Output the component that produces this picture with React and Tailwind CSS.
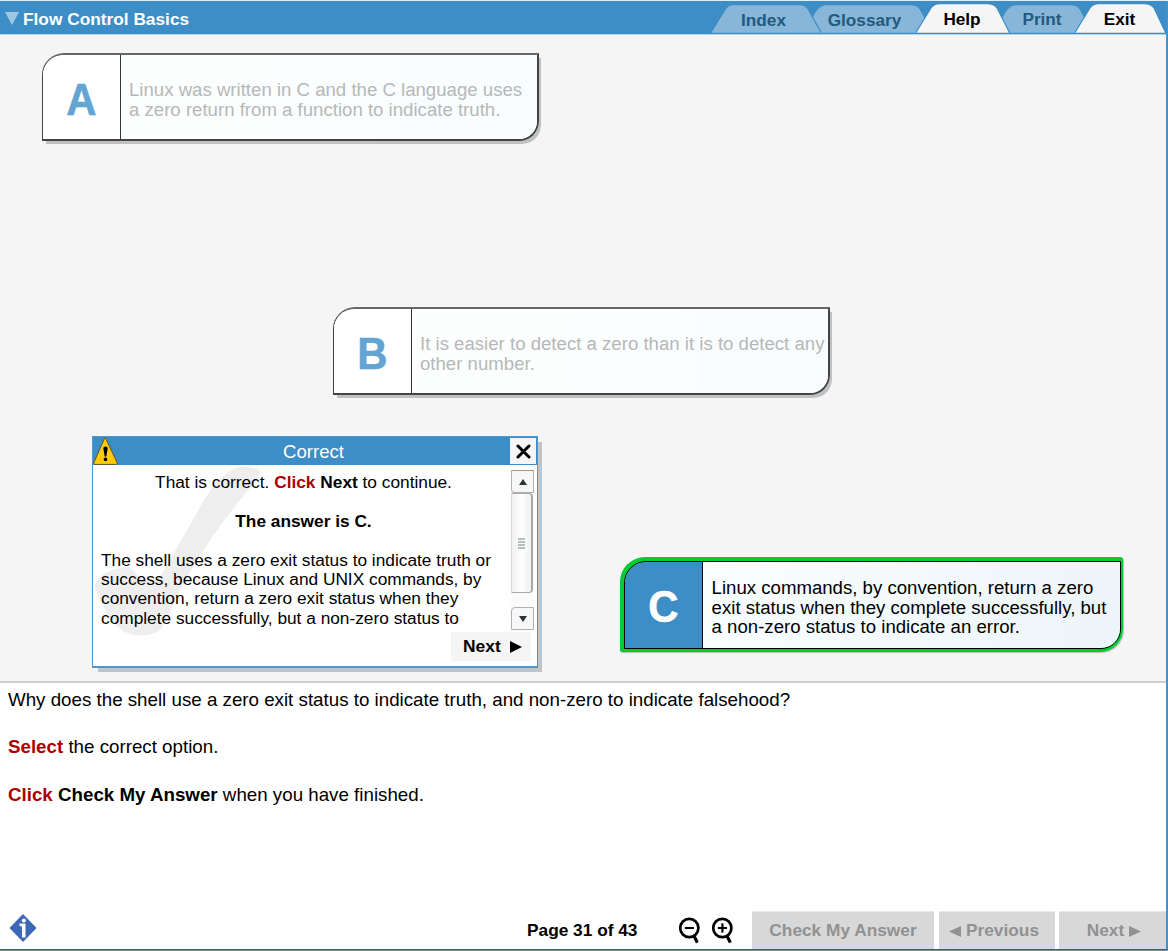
const inactive = '#88b6d8';
const active = '#f5f5f5';

function Tab({ label, width, path, fill, className, textClass }) {
  return (
    <button className={`relative h-[29px] shrink-0 text-[17.2px] font-bold whitespace-nowrap ${className}`}>
      <svg className="absolute inset-0 h-[29px]" width={width} height="29" viewBox={`0 0 ${width} 29`}>
        <path d={path} fill={fill} stroke="#3d8dc6" strokeWidth="1.2" />
      </svg>
      <span className={`relative ${textClass}`}>{label}</span>
    </button>
  );
}

function Option({ letter, lines, className, letterClass, textClass }) {
  return (
    <div className={`flex h-[88px] w-[497px] overflow-hidden rounded-tl-[22px] rounded-br-[20px] ${className}`}>
      <div className={`flex w-[78px] shrink-0 items-center justify-center border-r pt-[4px] text-[45px] leading-none font-bold [-webkit-text-stroke:0.6px_currentColor] ${letterClass}`}>
        <span className="inline-block scale-x-[0.93]">{letter}</span>
      </div>
      <div className={`flex flex-1 flex-col justify-center bg-linear-to-r text-[18.63px] leading-[19.6px] whitespace-nowrap ${textClass}`}>
        {lines.map((line) => <p key={line}>{line}</p>)}
      </div>
    </div>
  );
}

function Magnifier({ plus }) {
  return (
    <svg width="24" height="28" viewBox="0 0 24 28" fill="none" stroke="#000">
      <circle cx="11.3" cy="12" r="9.1" strokeWidth="2.7" />
      <path d="M6.8 12H16" strokeWidth="2" />
      {plus && <path d="M11.4 7.4V16.6" strokeWidth="2.2" />}
      <path d="M15.8 19.5L19.3 26.6" strokeWidth="3.2" />
    </svg>
  );
}

function Scrollbar() {
  return (
    <div className="mt-px flex h-[160px] w-[23px] flex-col bg-[#fbfbfb]">
      <div className="flex h-[23px] items-center justify-center rounded-bl-[4px] border border-[#b0b0b0] border-t-[#999] bg-[#f7f7f7]">
        <svg width="8" height="6"><path d="M4 0L8 6H0Z" fill="#2b333c" /></svg>
      </div>
      <div className="mr-px flex h-[100px] flex-col items-center justify-center gap-px rounded-r-[4px] border border-r-2 border-[#a9a9a9] border-l-[#d8d8d8] bg-linear-to-r from-[#f0f0f0] via-white to-[#f0f0f0]">
        <i className="h-[2px] w-[7px] bg-[#b5bdbd]" />
        <i className="h-[2px] w-[7px] bg-[#b5bdbd]" />
        <i className="h-[2px] w-[7px] bg-[#b5bdbd]" />
        <i className="h-[2px] w-[7px] bg-[#b5bdbd]" />
      </div>
      <div className="mt-auto flex h-[23px] items-center justify-center rounded-tl-[4px] border border-[#b0b0b0] bg-[#f7f7f7]">
        <svg width="8" height="6"><path d="M4 6L0 0H8Z" fill="#2b333c" /></svg>
      </div>
    </div>
  );
}

function Feedback() {
  return (
    <section className="flex h-[232px] w-[446px] flex-col border border-b-2 border-[#4d97cc] bg-white shadow-[5px_5px_0_-1px_#c3c3c3]">
      <header className="flex h-[28px] shrink-0 items-start bg-[#3d8dc6]">
        <svg width="26" height="28" viewBox="0 0 26 28">
          <path d="M12.5 1L24.3 26Q24.5 27.3 23.5 27.4H1.5Q.3 27.3.7 26L11.5 1.4Q12 .6 12.5 1Z" fill="#ffcb05" stroke="#5d542c" strokeWidth="1" />
          <path d="M12.5 9.5Q15 9.5 14.6 12L13.3 19.5H11.7L10.4 12Q10 9.5 12.5 9.5Z" />
          <circle cx="12.5" cy="22.4" r="1.8" />
        </svg>
        <h2 className="flex-1 text-center text-[18.6px] leading-[30px] text-white"><span className="pr-[2px]">Correct</span></h2>
        <button className="mt-px mr-px flex h-[26px] w-[26px] items-center justify-center bg-[#f5f5f5]">
          <svg width="15" height="15" viewBox="0 0 15 15"><path d="M2 2L13 13M13 2L2 13" stroke="#000" strokeWidth="3" strokeLinecap="round" /></svg>
        </button>
      </header>
      <div className="relative flex h-[166px] shrink-0 pt-[4px]">
        <svg className="absolute top-0 left-0" width="170" height="174" viewBox="40 122 510 522">
          <path d="M540 138Q525 127 490 127C450 130 410 165 375 225L240 460Q210 480 188 466L150 428C110 425 40 455 46 490C65 540 90 590 130 620C160 637 205 640 237 620Q257 600 270 565C340 400 460 250 530 168Q545 148 540 138Z" fill="#eee" />
        </svg>
        <div className="relative w-[418px] overflow-hidden pt-[4px] pl-[8px] text-[17.3px] leading-[19.4px] whitespace-nowrap text-black">
          <p className="pr-[5px] text-center">That is correct. <b className="text-[#ab0000]">Click</b> <b>Next</b> to continue.</p>
          <p className="my-[19.4px] pr-[5px] text-center font-bold">The answer is C.</p>
          <p>The shell uses a zero exit status to indicate truth or</p>
          <p>success, because Linux and UNIX commands, by</p>
          <p>convention, return a zero exit status when they</p>
          <p>complete successfully, but a non-zero status to</p>
        </div>
        <Scrollbar />
      </div>
      <button className="mt-[1px] mr-[6px] flex h-[29px] w-[80px] shrink-0 items-center gap-[9px] self-end bg-[#f5f5f5] pl-3 text-[17.4px] leading-none font-bold">
        Next
        <svg width="12" height="12"><path d="M0 0L12 6L0 12Z" /></svg>
      </button>
    </section>
  );
}

export default function App() {
  return (
    <div className="flex h-[951px] w-[1168px] flex-col overflow-hidden border-t border-b border-t-[#e5eeee] border-b-[#7d8f91] bg-white font-['Liberation_Sans',Arial,sans-serif] text-black">
      <div className="flex min-h-0 flex-1 flex-col border-r-2 border-b border-r-[#4392ca] border-b-[#2d5f96]">
        <header className="flex h-[34px] shrink-0 items-end border-b border-[#b5d5ea] bg-[#3d8dc6]">
          <svg className="mb-[8px] ml-[5px]" width="14" height="14"><path d="M0 0H14L7 13Z" fill="#9dc6e2" /></svg>
          <h1 className="ml-[4px] w-[688px] text-[17.3px] leading-[30px] font-bold whitespace-nowrap text-white">Flow Control Basics</h1>
          <nav className="mb-px flex h-[29px]">
            <Tab label="Index" width={110} fill={inactive} className="z-10 w-[110px] leading-[32px]" textClass="text-[#215a80] -left-[2.5px]"
              path="M-.6 29.4L15 4Q18 .6 23 .6H89Q94 .6 97 5L110.6 29.4Z" />
            <Tab label="Glossary" width={131} fill={inactive} className="-ml-[18px] w-[131px] leading-[32px]" textClass="text-[#215a80] -left-[4px]"
              path="M0 29.4L12 8Q17 .6 23 .6H107Q114 .6 117 5L131 29.4Z" />
            <Tab label="Help" width={94} fill={active} className="z-10 -ml-[18px] w-[94px] leading-[31px]" textClass="text-black -left-px"
              path="M-.6 29.4L15 4Q18-.4 24-.4H71Q78-.4 81 4L94 29.4Z" />
            <Tab label="Print" width={100} fill={inactive} className="-ml-[17px] w-[100px] leading-[31px]" textClass="text-[#215a80] -left-px"
              path="M0 29.4L12 8Q17 .6 23 .6H77Q84 .6 87 5L100 29.4Z" />
            <Tab label="Exit" width={91} fill={active} className="z-10 -ml-[18px] w-[91px] leading-[31px]" textClass="text-black -left-px"
              path="M-.6 29.4L15 4Q18-.4 24-.4H69Q76-.4 79 4L91 29.4Z" />
          </nav>
        </header>

        <main className="flex h-[648px] shrink-0 flex-col border-b-2 border-[#cecece] bg-[#f5f5f5]">
          <Option letter="A" lines={['Linux was written in C and the C language uses', 'a zero return from a function to indicate truth.']}
            className="mt-[18px] ml-[42px] border-2 border-l border-[#444] border-t-[#666] shadow-[3px_4px_0_-1px_#c1c1c1]"
            letterClass="border-[#333] bg-white text-[#62a4d2]"
            textClass="pt-[5px] pl-2 from-[#fdfefe] to-[#f9fdff] text-[#b6b8b8]" />
          <Option letter="B" lines={['It is easier to detect a zero than it is to detect any', 'other number.']}
            className="mt-[166px] ml-[333px] border-2 border-l border-[#444] border-t-[#666] shadow-[3px_4px_0_-1px_#c1c1c1]"
            letterClass="border-[#333] bg-white text-[#62a4d2]"
            textClass="pt-[5px] pl-2 from-[#fdfefe] to-[#f9fdff] text-[#b6b8b8]" />
          <div className="mt-[41px] flex items-start">
            <div className="ml-[92px]"><Feedback /></div>
            <div className="mt-[121px] ml-[82px] rounded-tl-[25px] rounded-tr-[3px] rounded-br-[23px] rounded-bl-[3px] bg-[#00cc33] py-[3.5px] pr-[2.4px] pl-[4px] shadow-[0.5px_1px_1px_#bbb]">
              <Option letter="C" lines={['Linux commands, by convention, return a zero', 'exit status when they complete successfully, but', 'a non-zero status to indicate an error.']}
                className="border border-black"
                letterClass="border-black bg-[#3d8dc6] text-white"
                textClass="pt-[6px] pl-[8.6px] from-[#f9feff] to-[#edf5f9] text-black" />
            </div>
          </div>
        </main>

        <section className="flex-1 pl-2 text-[18.74px] leading-[24px] whitespace-nowrap">
          <p className="mt-[5px]">Why does the shell use a zero exit status to indicate truth, and non-zero to indicate falsehood?</p>
          <p className="mt-[23px]"><b className="text-[#ab0000]">Select</b> the correct option.</p>
          <p className="mt-6"><b className="text-[#ab0000]">Click</b> <b>Check My Answer</b> when you have finished.</p>
        </section>

        <footer className="flex h-[38px] shrink-0 items-center text-[17.3px] font-bold whitespace-nowrap">
          <svg className="mb-[4px] ml-[9px]" width="28" height="28" viewBox="0 0 28 28">
            <path d="M14 0L27.5 14L14 28L.5 14Z" fill="#3d67b7" />
            <path d="M10.5 9.5H16.5V23.5H13V12.5L10.5 12Z" fill="#fff" />
            <circle cx="14.8" cy="6.5" r="2" fill="#fff" />
          </svg>
          <span className="ml-[490px] w-[151px] pt-px">Page 31 of 43</span>
          <div className="flex gap-[9px]"><Magnifier /><Magnifier plus /></div>
          <div className="ml-auto flex gap-[4px] text-[#919191]">
            <button className="mr-px flex h-[38px] w-[182px] items-center justify-center border-t border-[#e9e9e9] bg-[#d8d8d8]">Check My Answer</button>
            <button className="flex h-[38px] w-[116px] items-center justify-center gap-[5px] border-t border-[#e9e9e9] bg-[#d8d8d8] pt-px pr-[6px]">
              <svg width="12" height="11" fill="currentColor"><path d="M12 0V11L0 5.5Z" /></svg>Previous
            </button>
            <button className="flex h-[38px] w-[107px] items-center justify-center gap-[5px] border-t border-[#e9e9e9] bg-[#d8d8d8] pt-px pl-[3px]">
              Next<svg width="12" height="11" fill="currentColor"><path d="M0 0V11L12 5.5Z" /></svg>
            </button>
          </div>
        </footer>
      </div>
    </div>
  );
}
